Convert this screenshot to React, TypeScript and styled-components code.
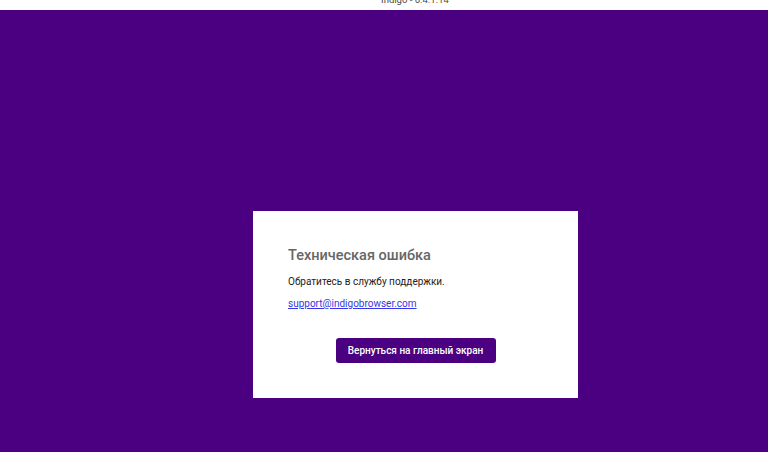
import React from "react";
import styled, { createGlobalStyle } from "styled-components";

const Global = createGlobalStyle`
  html, body { margin: 0; padding: 0; }
  body { background: #4b0082; font-family: Roboto, "Liberation Sans", Arial, sans-serif; }
  #root { min-height: 452px; }
`;

const Page = styled.div`
  display: flex;
  flex-direction: column;
  min-height: 452px;
  background: #4b0082;
`;

const TitleBar = styled.div`
  height: 10px;
  background: #ffffff;
  overflow: hidden;
  display: flex;
  justify-content: center;
  padding-left: 62px;
`;

const TitleText = styled.span`
  font-size: 9.5px;
  line-height: 12px;
  color: #4a4a4a;
  margin-top: -6.5px;
  white-space: nowrap;
`;

const Main = styled.main`
  flex: 1;
  display: flex;
  align-items: flex-start;
  padding: 201px 0 0 253px;
`;

const Card = styled.section`
  width: 325px;
  box-sizing: border-box;
  background: #ffffff;
  padding: 35px 35px 35px;
  display: flex;
  flex-direction: column;
`;

const Heading = styled.h1`
  margin: 0;
  font-size: 14.5px;
  line-height: 19px;
  font-weight: 500;
  color: #666666;
`;

const Message = styled.p`
  margin: 9px 0 0;
  font-size: 10px;
  line-height: 16px;
  color: #222222;
`;

const MailLink = styled.a`
  margin-top: 6px;
  font-size: 10px;
  line-height: 16px;
  color: #3636e6;
  text-decoration: underline;
  align-self: flex-start;
`;

const Actions = styled.div`
  margin-top: 26px;
  display: flex;
  justify-content: center;
`;

const PrimaryButton = styled.button`
  width: 160px;
  height: 25px;
  border: none;
  border-radius: 3px;
  background: #4b0082;
  color: #ffffff;
  font-family: Roboto, "Liberation Sans", Arial, sans-serif;
  font-size: 10px;
  font-weight: 500;
  white-space: nowrap;
  cursor: pointer;
  padding: 0;
`;

export default function App() {
  return (
    <>
      <Global />
      <Page>
        <TitleBar>
          <TitleText>Indigo - 6.4.1.14</TitleText>
        </TitleBar>
        <Main>
          <Card>
            <Heading>Техническая ошибка</Heading>
            <Message>Обратитесь в службу поддержки.</Message>
            <MailLink href="mailto:support@indigobrowser.com">support@indigobrowser.com</MailLink>
            <Actions>
              <PrimaryButton>Вернуться на главный экран</PrimaryButton>
            </Actions>
          </Card>
        </Main>
      </Page>
    </>
  );
}
